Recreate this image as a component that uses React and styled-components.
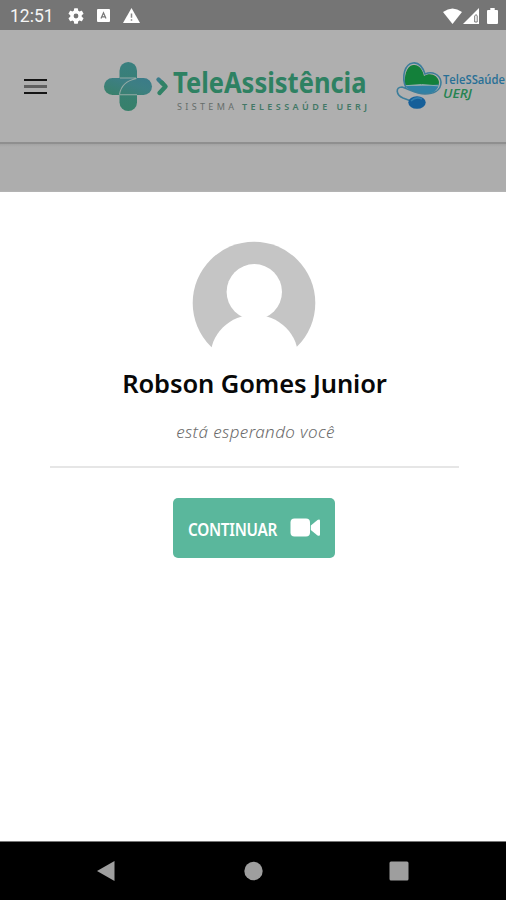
import React from "react";
import styled, { createGlobalStyle } from "styled-components";

const GlobalStyle = createGlobalStyle`
  * { box-sizing: border-box; }
  body { margin: 0; background: #fff; font-family: "Noto Sans", "Open Sans", sans-serif; }
  svg { display: block; flex: none; overflow: visible; }
`;

const Screen = styled.div`
  display: flex;
  flex-direction: column;
  width: 506px;
  height: 900px;
  overflow: hidden;
  background: #fff;
`;

const StatusBar = styled.header`
  display: flex;
  align-items: center;
  height: 30px;
  flex: none;
  padding: 1px 8px 0 10px;
  background: #757575;
  color: #fff;
`;

const Clock = styled.span`
  width: 58px;
  font: 400 17.5px/28px Roboto, sans-serif;
  color: #f5f5f5;
`;

const StatusIcons = styled.div`
  display: flex;
  align-items: center;
  gap: ${(p) => p.$gap}px;
  margin-left: ${(p) => (p.$end ? "auto" : "0")};
`;

const AppBar = styled.div`
  display: flex;
  align-items: flex-start;
  height: 114px;
  flex: none;
  background: #afafaf;
  border-bottom: 2px solid #8f8f8f;
`;

const MenuButton = styled.button`
  display: flex;
  flex-direction: column;
  gap: 4px;
  width: 23px;
  margin: 49px 57px 0 24px;
  padding: 0;
  border: 0;
  background: none;
`;

const MenuLine = styled.span`
  height: ${(p) => p.$height}px;
  background: ${(p) => p.$color};
`;

const Backdrop = styled.div`
  height: 48px;
  flex: none;
  background: linear-gradient(#a3a3a3, #adadad 3px, #adadad 46px, #b5b5b5);
`;

const Sheet = styled.main`
  display: flex;
  flex: 1;
  flex-direction: column;
  align-items: center;
  padding: 49px 48px 0 50px;
  background: #fff;
`;

const Name = styled.h1`
  margin: 0 0 0 1px;
  font-size: 25.5px;
  font-weight: 600;
  line-height: 36px;
  letter-spacing: -0.1px;
  white-space: nowrap;
  color: #080808;
`;

const Message = styled.p`
  margin: 19px 0 0 3px;
  font-size: 17px;
  font-style: italic;
  font-weight: 300;
  line-height: 24px;
  letter-spacing: 0.4px;
  white-space: nowrap;
  color: #6c6c6c;
`;

const Divider = styled.hr`
  width: 409px;
  height: 2px;
  margin: 22px 0 30px;
  border: 0;
  background: #e6e6e6;
`;

const ContinueButton = styled.button`
  display: flex;
  align-items: center;
  justify-content: space-between;
  width: 162px;
  height: 60px;
  padding: 0 14px 0 15px;
  border: 0;
  border-radius: 5px;
  background: #5ab79c;
  color: #fff;
`;

const ButtonLabel = styled.span`
  width: 90px;
  padding-top: 3px;
  font: 600 17px/24px "Noto Sans", sans-serif;
  letter-spacing: -0.3px;
  white-space: nowrap;
  transform: scaleX(0.9);
  transform-origin: left;
`;

const NavBar = styled.nav`
  display: flex;
  align-items: center;
  justify-content: space-between;
  height: 59px;
  flex: none;
  padding: 0 97px 0 96px;
  border-top: 1px solid #777;
  background: #000;
`;

const Logos = styled.div`
  display: flex;
  gap: 26px;
  margin-top: 26px;
`;

const GearIcon = () => (
  <svg width="16" height="16" viewBox="2 2 20 20">
    <path fill="#fff" d="M19.14 12.94a7 7 0 0 0 0-1.88l2.03-1.58a.5.5 0 0 0 .12-.61l-1.92-3.32a.5.5 0 0 0-.59-.22l-2.39.96a7 7 0 0 0-1.62-.94l-.36-2.54a.5.5 0 0 0-.48-.41h-3.84a.5.5 0 0 0-.47.41l-.36 2.54a7 7 0 0 0-1.62.94l-2.39-.96a.5.5 0 0 0-.59.22L2.74 8.87a.5.5 0 0 0 .12.61l2.03 1.58a7 7 0 0 0 0 1.88l-2.03 1.58a.5.5 0 0 0-.12.61l1.92 3.32c.12.22.37.29.59.22l2.39-.96c.5.38 1.03.7 1.62.94l.36 2.54c.05.24.24.41.48.41h3.84c.24 0 .44-.17.47-.41l.36-2.54a7 7 0 0 0 1.62-.94l2.39.96c.22.08.47 0 .59-.22l1.92-3.32a.5.5 0 0 0-.12-.61zM12 15a3 3 0 1 1 0-6 3 3 0 0 1 0 6z" />
  </svg>
);

const KeyboardIcon = () => (
  <svg width="13" height="13" viewBox="0 0 13 13">
    <rect width="13" height="13" rx="1" fill="#fff" />
    <path d="M4 9.5 6.5 3.8 9 9.5M5 7.8h3" fill="none" stroke="#777" strokeWidth="1.2" />
  </svg>
);

const WarningIcon = () => (
  <svg width="17" height="15" viewBox="0 0 17 15">
    <path d="M8.5 0 17 15H0z" fill="#fff" />
    <path d="M8.5 5.4v4.4M8.5 11.2v1.6" stroke="#888" strokeWidth="1.5" />
  </svg>
);

const WifiIcon = () => (
  <svg width="19" height="16" viewBox="0 0 19 16">
    <path d="M0 4Q9.5-3 19 4L9.5 16z" fill="#fff" />
  </svg>
);

const SignalIcon = () => (
  <svg width="16" height="16" viewBox="0 0 16 16">
    <path d="M16 0v16H0z" fill="#fff" />
    <path d="M11.7 8q1.500-3 2.500 0v6h-2.500z" fill="none" stroke="#777" strokeWidth="1" />
  </svg>
);

const BatteryIcon = () => (
  <svg width="11" height="16" viewBox="0 0 11 16">
    <path d="M3.3 0h4.4v2H10q1 0 1 1v12q0 1-1 1H1q-1 0-1-1V3q0-1 1-1h2.3z" fill="#fff" />
  </svg>
);

const AssistLogo = () => (
  <svg width="266" height="60" viewBox="104 56 266 60">
    <defs>
      <linearGradient id="crossH" x1="0" x2="1" y1="1" y2="0">
        <stop offset="0" stopColor="#398168" />
        <stop offset=".6" stopColor="#3d7f83" />
        <stop offset="1" stopColor="#3b7b8a" />
      </linearGradient>
      <linearGradient id="crossV" x1="0" x2="0" y1="0" y2="1">
        <stop offset="0" stopColor="#397f7f" />
        <stop offset="1" stopColor="#37806a" />
      </linearGradient>
    </defs>
    <rect x="119.500" y="62" width="17.500" height="49" rx="8.7" fill="url(#crossV)" />
    <rect x="104" y="78" width="48" height="17" rx="8.5" fill="url(#crossH)" />
    <path d="M119.5 94.5q2-13 17-16M119.5 94.8h17.5M120 78h16" fill="none" stroke="#94aaa5" strokeWidth="1.1" />
    <path d="m158.500 79.500 4 4" stroke="#3b7b8a" strokeWidth="4.400" strokeLinecap="round" />
    <path d="m159.500 93 6-6.5-3.7-4" fill="none" stroke="#318266" strokeWidth="4.4" strokeLinecap="round" strokeLinejoin="round" />
    <text x="173" y="93" textLength="193.500" lengthAdjust="spacingAndGlyphs" fontFamily="Noto Sans, sans-serif" fontWeight="700" fontSize="29" fill="#2e8162">TeleAssistência</text>
    <g fontFamily="Noto Sans, sans-serif" fontSize="9">
      <text x="177" y="109.8" textLength="57" fill="#656d6a">SISTEMA</text>
      <text x="242" y="109.8" textLength="125" fontWeight="600" fill="#427866">TELESSAÚDE UERJ</text>
    </g>
  </svg>
);

const TelessaudeLogo = () => (
  <svg width="110" height="60" viewBox="396 56 110 60">
    <defs>
      <clipPath id="heart">
        <path d="M405 86C404 77 406 66 413 65c6-1 10 5 11 11 6-4 14-1 15 6 0 9-7 12-14 12-9 0-16-4-20-8z" />
      </clipPath>
    </defs>
    <g clipPath="url(#heart)">
      <path d="M400 60h42v25h-42z" fill="#13803a" />
      <path d="M400 85q20 2 40-1v13h-40z" fill="#3181a5" />
      <path d="M402 86q20-3 38 0" fill="none" stroke="#8fadb0" />
    </g>
    <path d="M406 88C401 76 405 64 413 63c7-1 10 5 12 11 7-3 15 0 16 8 0 9-8 12-16 12-9 0-14-4-23-7-7 0-6 8 1 11l8 3" fill="none" stroke="#3d7e9b" strokeWidth="1.6" />
    <ellipse cx="417" cy="102.5" rx="8.7" ry="6.3" fill="#165f99" />
    <path d="M411 101q5-5 11-2" fill="none" stroke="#337fae" strokeWidth="1.5" />
    <g fontFamily="Open Sans, sans-serif" fontWeight="600">
      <text x="443" y="84" textLength="62" lengthAdjust="spacingAndGlyphs" fontSize="12.500" fill="#286f96">TeleSSaúde</text>
      <text x="443" y="98" textLength="29" lengthAdjust="spacingAndGlyphs" fontSize="13" fontStyle="italic" fill="#278452">UERJ</text>
    </g>
  </svg>
);

const Avatar = () => (
  <svg width="124" height="124" viewBox="192 241 124 124">
    <circle cx="254" cy="303" r="61.3" fill="#c5c5c5" />
    <circle cx="254.3" cy="291.8" r="27.7" fill="#fff" />
    <circle cx="254.3" cy="359" r="44.5" fill="#fff" />
  </svg>
);

const CameraIcon = () => (
  <svg width="31" height="20" viewBox="0 0 31 20">
    <rect x="0.5" y="0.500" width="19.5" height="18" rx="4" fill="#fff" />
    <path d="M20.8 7.500 27.5 2q2.500-1.200 2.500 1v13.500q0 2-2.500 1L20.8 12z" fill="#fff" />
  </svg>
);

const BackIcon = () => (
  <svg width="20" height="22" viewBox="0 0 20 22">
    <path d="M1 11 18.5 1v20z" fill="#9e9e9e" />
  </svg>
);

const HomeIcon = () => (
  <svg width="20" height="20" viewBox="0 0 20 20">
    <circle cx="10.5" cy="10" r="9.2" fill="#9e9e9e" />
  </svg>
);

const RecentIcon = () => (
  <svg width="20" height="20" viewBox="0 0 20 20">
    <rect x="0.5" y="0.5" width="19" height="19" rx="1.5" fill="#9e9e9e" />
  </svg>
);

export default function App() {
  return (
    <Screen>
      <GlobalStyle />
      <StatusBar>
        <Clock>12:51</Clock>
        <StatusIcons $gap={13}>
          <GearIcon />
          <KeyboardIcon />
          <WarningIcon />
        </StatusIcons>
        <StatusIcons $gap={8} $end>
          <StatusIcons $gap={1}>
            <WifiIcon />
            <SignalIcon />
          </StatusIcons>
          <BatteryIcon />
        </StatusIcons>
      </StatusBar>
      <AppBar>
        <MenuButton aria-label="Menu">
          <MenuLine $height={2} $color="#151515" />
          <MenuLine $height={3} $color="#606060" />
          <MenuLine $height={2} $color="#151515" />
        </MenuButton>
        <Logos>
          <AssistLogo />
          <TelessaudeLogo />
        </Logos>
      </AppBar>
      <Backdrop />
      <Sheet>
        <Avatar />
        <Name>Robson Gomes Junior</Name>
        <Message>está esperando você</Message>
        <Divider />
        <ContinueButton>
          <ButtonLabel>CONTINUAR</ButtonLabel>
          <CameraIcon />
        </ContinueButton>
      </Sheet>
      <NavBar>
        <BackIcon />
        <HomeIcon />
        <RecentIcon />
      </NavBar>
    </Screen>
  );
}
